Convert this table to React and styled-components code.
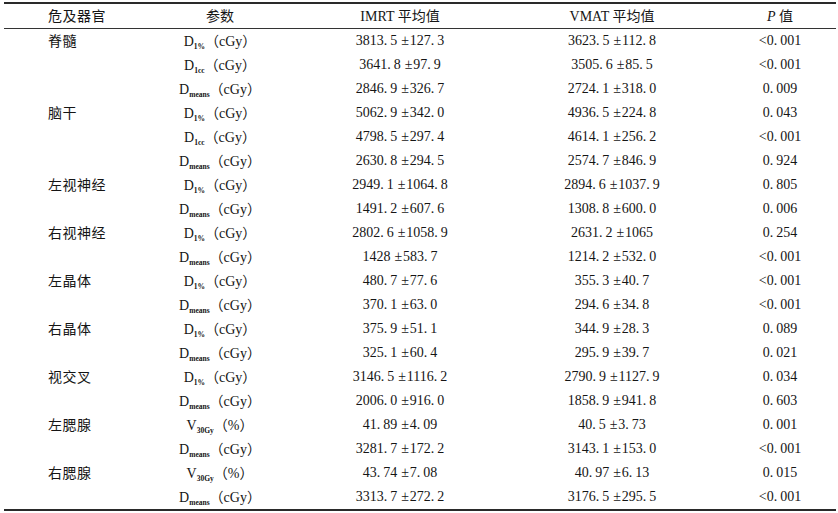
import React from 'react';
import styled, { createGlobalStyle } from 'styled-components';

const Global = createGlobalStyle`
  body {
    margin: 0;
    background: #fff;
    font-family: "Liberation Serif", "Noto Sans CJK SC", serif;
    color: #151515;
  }
`;

let Table = styled.div`
    width: 832px;
    margin: 2px 0 0 4px;
    border-top: 2px solid #2a2a2a;
    border-bottom: 2px solid #2a2a2a;
`;

let Row = styled.div`
    display: grid;
    grid-template-columns: 136px 160px 200px 224px 112px;
    height: 24px;
    line-height: 16px;
    align-items: center;
    font-size: 14px;
    border-bottom: ${p => (p.head ? '1px solid #333' : 'none')};
`;

let Organ = styled.div`
    padding-left: 44px;
    letter-spacing: 0.5px;
    font-family: "Noto Sans CJK SC", sans-serif;
    font-size: 14px;
    margin-top: -2px;
`;

let Cell = styled.div`
    text-align: center;
    white-space: nowrap;
`;

let HeadCjk = styled.span`
    font-family: "Noto Sans CJK SC", sans-serif;
    font-size: 14px;
`;

let Sub = styled.sub`
    font-size: 7.5px;
    font-weight: bold;
    vertical-align: -3px;
    line-height: 0;
    color: #151515;
`;

let Paren = styled.span`
    font-family: "Noto Sans CJK SC", sans-serif;
    font-size: 14px;
`;

let Dot = styled.span`
    margin-right: 3px;
`;

let Pm = styled.span`
    margin: 0 1px 0 4px;
`;

const rows = [
  ['脊髓', 'D', '1%', 'cGy', '3813.5|127.3', '3623.5|112.8', '<0.001'],
  ['', 'D', '1cc', 'cGy', '3641.8|97.9', '3505.6|85.5', '<0.001'],
  ['', 'D', 'means', 'cGy', '2846.9|326.7', '2724.1|318.0', '0.009'],
  ['脑干', 'D', '1%', 'cGy', '5062.9|342.0', '4936.5|224.8', '0.043'],
  ['', 'D', '1cc', 'cGy', '4798.5|297.4', '4614.1|256.2', '<0.001'],
  ['', 'D', 'means', 'cGy', '2630.8|294.5', '2574.7|846.9', '0.924'],
  ['左视神经', 'D', '1%', 'cGy', '2949.1|1064.8', '2894.6|1037.9', '0.805'],
  ['', 'D', 'means', 'cGy', '1491.2|607.6', '1308.8|600.0', '0.006'],
  ['右视神经', 'D', '1%', 'cGy', '2802.6|1058.9', '2631.2|1065', '0.254'],
  ['', 'D', 'means', 'cGy', '1428|583.7', '1214.2|532.0', '<0.001'],
  ['左晶体', 'D', '1%', 'cGy', '480.7|77.6', '355.3|40.7', '<0.001'],
  ['', 'D', 'means', 'cGy', '370.1|63.0', '294.6|34.8', '<0.001'],
  ['右晶体', 'D', '1%', 'cGy', '375.9|51.1', '344.9|28.3', '0.089'],
  ['', 'D', 'means', 'cGy', '325.1|60.4', '295.9|39.7', '0.021'],
  ['视交叉', 'D', '1%', 'cGy', '3146.5|1116.2', '2790.9|1127.9', '0.034'],
  ['', 'D', 'means', 'cGy', '2006.0|916.0', '1858.9|941.8', '0.603'],
  ['左腮腺', 'V', '30Gy', '%', '41.89|4.09', '40.5|3.73', '0.001'],
  ['', 'D', 'means', 'cGy', '3281.7|172.2', '3143.1|153.0', '<0.001'],
  ['右腮腺', 'V', '30Gy', '%', '43.74|7.08', '40.97|6.13', '0.015'],
  ['', 'D', 'means', 'cGy', '3313.7|272.2', '3176.5|295.5', '<0.001'],
];

const Num = ({ v }) => {
  let parts = v.split('.');
  return (
    <>
      {parts.map((p, i) => (
        <React.Fragment key={i}>
          {i > 0 && <Dot>.</Dot>}
          {p}
        </React.Fragment>
      ))}
    </>
  );
};

const MeanSd = ({ v }) => {
  let [m, sd] = v.split('|');
  return (
    <>
      <Num v={m} />
      <Pm>±</Pm>
      <Num v={sd} />
    </>
  );
};

const App = () => {
  return (
    <>
      <Global />
      <Table>
        <Row head>
          <Organ>危及器官</Organ>
          <Cell><HeadCjk>参数</HeadCjk></Cell>
          <Cell>IMRT <HeadCjk>平均值</HeadCjk></Cell>
          <Cell>VMAT <HeadCjk>平均值</HeadCjk></Cell>
          <Cell><i>P</i> <HeadCjk>值</HeadCjk></Cell>
        </Row>
        {rows.map((r, i) => (
          <Row key={i}>
            <Organ>{r[0]}</Organ>
            <Cell>
              {r[1]}<Sub>{r[2]}</Sub><Paren>（</Paren>{r[3]}<Paren>）</Paren>
            </Cell>
            <Cell><MeanSd v={r[4]} /></Cell>
            <Cell><MeanSd v={r[5]} /></Cell>
            <Cell><Num v={r[6]} /></Cell>
          </Row>
        ))}
      </Table>
    </>
  );
};

export default App;
